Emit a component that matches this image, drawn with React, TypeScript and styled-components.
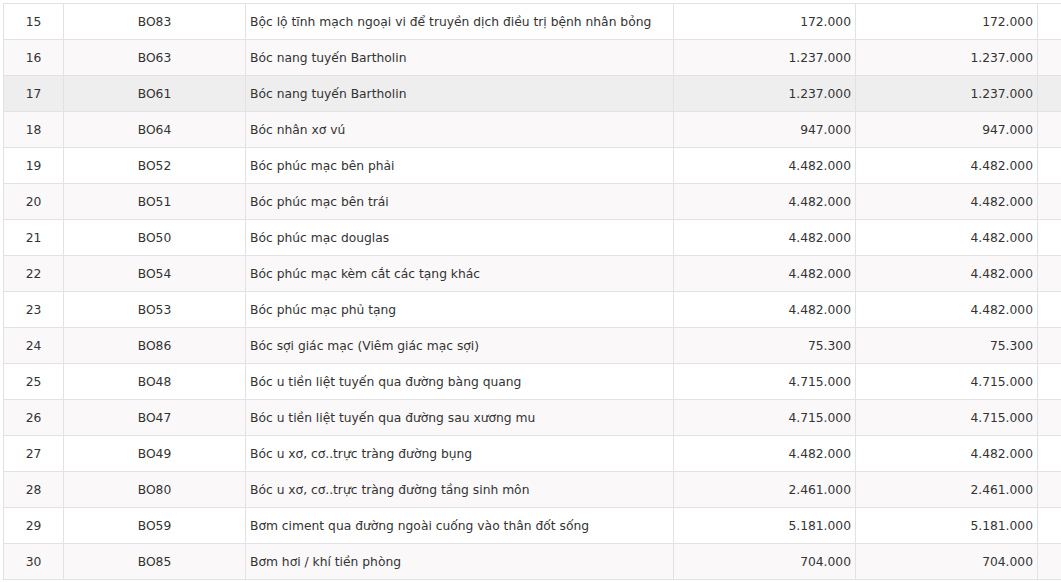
import styled, { createGlobalStyle } from 'styled-components'

const Global = createGlobalStyle`
  html, body { margin: 0; padding: 0; background: #fff; overflow: hidden; }
  body { font-family: Tahoma, "DejaVu Sans", sans-serif; }
`

const Wrap = styled.div`
  padding: 3px 0 0 3px;
  width: 1100px;
`

const Table = styled.table`
  border-collapse: collapse;
  table-layout: fixed;
  width: 1094px;
  font-size: 12.3px;
  color: #333;
`

const Col = styled.col<{ $w: number }>`
  width: ${({ $w }) => $w}px;
`

const Row = styled.tr<{ $shade: 'white' | 'alt' | 'hover' }>`
  height: 36px;
  background: ${({ $shade }) => ($shade === 'hover' ? '#eeeeee' : $shade === 'alt' ? '#faf8f9' : '#ffffff')};
`

const Cell = styled.td<{ $align?: 'left' | 'center' | 'right' }>`
  border: 1px solid #e2e2e2;
  padding: 0 4px;
  text-align: ${({ $align }) => $align || 'left'};
  white-space: nowrap;
  overflow: hidden;
`

const widths = [60, 182, 428, 182, 182, 60]

const rows: [number, string, string, string][] = [
  [15, 'BO83', 'Bộc lộ tĩnh mạch ngoại vi để truyền dịch điều trị bệnh nhân bỏng', '172.000'],
  [16, 'BO63', 'Bóc nang tuyến Bartholin', '1.237.000'],
  [17, 'BO61', 'Bóc nang tuyến Bartholin', '1.237.000'],
  [18, 'BO64', 'Bóc nhân xơ vú', '947.000'],
  [19, 'BO52', 'Bóc phúc mạc bên phải', '4.482.000'],
  [20, 'BO51', 'Bóc phúc mạc bên trái', '4.482.000'],
  [21, 'BO50', 'Bóc phúc mạc douglas', '4.482.000'],
  [22, 'BO54', 'Bóc phúc mạc kèm cắt các tạng khác', '4.482.000'],
  [23, 'BO53', 'Bóc phúc mạc phủ tạng', '4.482.000'],
  [24, 'BO86', 'Bóc sợi giác mạc (Viêm giác mạc sợi)', '75.300'],
  [25, 'BO48', 'Bóc u tiền liệt tuyến qua đường bàng quang', '4.715.000'],
  [26, 'BO47', 'Bóc u tiền liệt tuyến qua đường sau xương mu', '4.715.000'],
  [27, 'BO49', 'Bóc u xơ, cơ..trực tràng đường bụng', '4.482.000'],
  [28, 'BO80', 'Bóc u xơ, cơ..trực tràng đường tầng sinh môn', '2.461.000'],
  [29, 'BO59', 'Bơm ciment qua đường ngoài cuống vào thân đốt sống', '5.181.000'],
  [30, 'BO85', 'Bơm hơi / khí tiền phòng', '704.000'],
]

export default function App() {
  return (
    <Wrap>
      <Global />
      <Table>
        <colgroup>
          {widths.map((w, i) => (
            <Col key={i} $w={w} />
          ))}
        </colgroup>
        <tbody>
          {rows.map(([n, code, name, price]) => (
            <Row key={n} $shade={n === 17 ? 'hover' : n % 2 === 0 ? 'alt' : 'white'}>
              <Cell $align="center">{n}</Cell>
              <Cell $align="center">{code}</Cell>
              <Cell>{name}</Cell>
              <Cell $align="right">{price}</Cell>
              <Cell $align="right">{price}</Cell>
              <Cell />
            </Row>
          ))}
        </tbody>
      </Table>
    </Wrap>
  )
}
